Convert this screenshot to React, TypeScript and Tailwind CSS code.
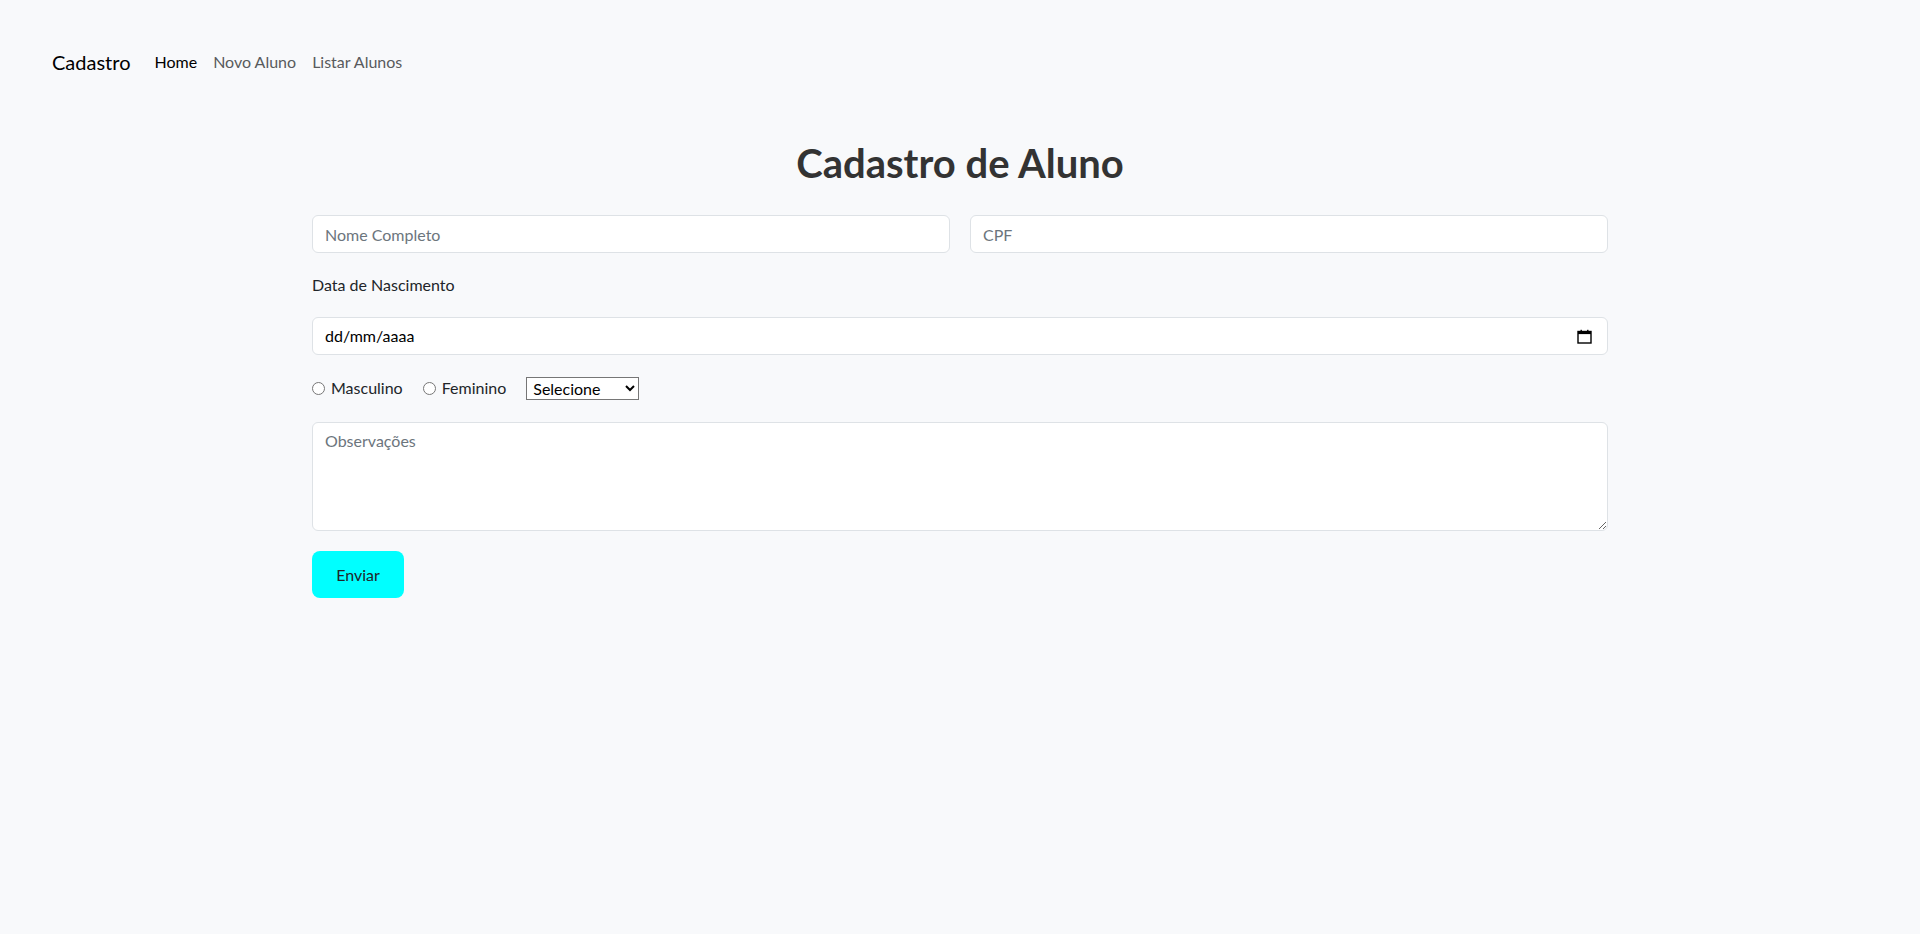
import { useState } from "react";

function CalendarIcon() {
  return (
    <svg width="15" height="15" viewBox="0 0 15 15" className="shrink-0">
      <rect x="1" y="2.5" width="13" height="11.5" fill="none" stroke="#000" strokeWidth="1.4" />
      <rect x="1" y="2.5" width="13" height="2.6" fill="#000" />
      <rect x="3.5" y="0.8" width="1.4" height="2.4" fill="#000" />
      <rect x="10.1" y="0.8" width="1.4" height="2.4" fill="#000" />
    </svg>
  );
}

const inputClass =
  "h-[38px] w-full rounded-[6px] border border-[#dee2e6] bg-white px-3 text-[16px] text-[#212529] outline-none placeholder:text-[#6c757d]";

export default function App() {
  const [sexo, setSexo] = useState("");

  return (
    <div className="min-h-[934px] bg-[#f8f9fb] pt-[32px] font-[Lato,sans-serif] text-[16px] text-[#212529]">
      <nav className="flex h-[60px] items-center pl-[52px]">
        <span className="mr-[24px] text-[20px] text-black">Cadastro</span>
        <div className="flex items-center gap-[16px]">
          <a className="text-black">Home</a>
          <a className="text-[#595b5d]">Novo Aluno</a>
          <a className="text-[#595b5d]">Listar Alunos</a>
        </div>
      </nav>

      <main className="mx-auto w-[1296px]">
        <h1 className="mt-[47px] mb-[28px] text-center text-[40px] font-bold leading-[48px] text-[#333333]">
          Cadastro de Aluno
        </h1>

        <form className="flex flex-col gap-[20px]" onSubmit={(e) => e.preventDefault()}>
          <div className="grid grid-cols-2 gap-[20px]">
            <input className={inputClass} placeholder="Nome Completo" />
            <input className={inputClass} placeholder="CPF" />
          </div>

          <label className="leading-[24px]">Data de Nascimento</label>

          <div className="flex h-[38px] w-full items-center justify-between rounded-[6px] border border-[#dee2e6] bg-white pl-3 pr-[15px] text-black">
            <span>dd/mm/aaaa</span>
            <CalendarIcon />
          </div>

          <div className="mt-px flex h-[24px] items-center">
            <label className="flex items-center">
              <input
                type="radio"
                name="sexo"
                className="m-0 h-[13px] w-[13px]"
                checked={sexo === "M"}
                onChange={() => setSexo("M")}
              />
              <span className="ml-[6px]">Masculino</span>
            </label>
            <label className="ml-[20px] flex items-center">
              <input
                type="radio"
                name="sexo"
                className="m-0 h-[13px] w-[13px]"
                checked={sexo === "F"}
                onChange={() => setSexo("F")}
              />
              <span className="ml-[6px]">Feminino</span>
            </label>
            <select className="ml-[20px] h-[23px] w-[113px] border border-[#767676] bg-white pl-[2px] text-[16px] text-black">
              <option>Selecione</option>
              <option>Manhã</option>
              <option>Tarde</option>
              <option>Noite</option>
            </select>
          </div>

          <textarea
            className="mt-[2px] h-[109px] w-full rounded-[6px] border border-[#dee2e6] bg-white px-3 py-[6px] text-[16px] outline-none placeholder:text-[#6c757d]"
            placeholder="Observações"
          />

          <div>
            <button
              type="submit"
              className="h-[47px] w-[92px] rounded-[8px] bg-[#00ffff] text-[16px] text-[#212529]"
            >
              Enviar
            </button>
          </div>
        </form>
      </main>
    </div>
  );
}
